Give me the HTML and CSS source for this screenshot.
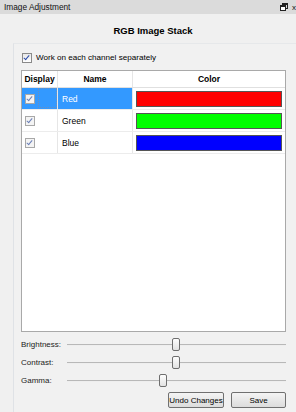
FILE: index.html
```html
<!DOCTYPE html>
<html>
<head>
  <title>Image Adjustment</title>
  <link rel="stylesheet" href="styles.css">
</head>
<body>
  <div class="titlebar">
    <span>Image Adjustment</span>
    <span class="tools">
      <svg width="8" height="8" viewBox="0 0 8 8"><rect x="2.5" y="0.5" width="5" height="5" fill="none" stroke="#222"/><rect x="0.5" y="2.5" width="5" height="5" fill="#fff" stroke="#222"/><rect x="0.5" y="2.5" width="5" height="1.5" fill="#222"/><rect x="2.5" y="0.5" width="5" height="1.5" fill="#222"/></svg>
      <span class="close">x</span>
    </span>
  </div>
  <h1 class="heading">RGB Image Stack</h1>
  <div class="frame">
    <div class="panel">
      <label class="check-row"><span class="box checked"></span>Work on each channel separately</label>
      <div class="table">
        <div class="row head">
          <div class="c1">Display</div><div class="c2">Name</div><div class="c3">Color</div>
        </div>
        <div class="row selected">
          <div class="c1"><span class="box checked dim"></span><span class="focus"></span></div>
          <div class="c2">Red</div>
          <div class="c3"><span class="swatch" style="background:#ff0000"></span></div>
        </div>
        <div class="row">
          <div class="c1"><span class="box checked dim"></span></div>
          <div class="c2">Green</div>
          <div class="c3"><span class="swatch" style="background:#00ff00"></span></div>
        </div>
        <div class="row">
          <div class="c1"><span class="box checked dim"></span></div>
          <div class="c2">Blue</div>
          <div class="c3"><span class="swatch" style="background:#0000ff"></span></div>
        </div>
      </div>
      <div class="sliders">
        <div class="slider-row"><span>Brightness:</span><div class="groove"><span class="handle" style="left:105px"></span></div></div>
        <div class="slider-row"><span>Contrast:</span><div class="groove"><span class="handle" style="left:105px"></span></div></div>
        <div class="slider-row"><span>Gamma:</span><div class="groove"><span class="handle" style="left:92px"></span></div></div>
      </div>
      <div class="buttons">
        <button class="btn undo">Undo Changes</button>
        <button class="btn save">Save</button>
      </div>
    </div>
  </div>
</body>
</html>
```

FILE: styles.css
```css
body { margin: 0; background: #f0f0f0; font-family: "Liberation Sans", Arial, sans-serif; font-size: 8px; color: #000; width: 296px; height: 412px; overflow: hidden; }
.titlebar { height: 14px; background: #dbdbdb; display: flex; justify-content: space-between; align-items: center; padding-left: 4px; font-size: 8.3px; color: #111; }
.tools { display: flex; align-items: center; gap: 4px; margin-right: 0; }
.close { font-size: 8px; }
.heading { margin: 0; height: 29px; line-height: 34px; text-align: center; font-size: 9.5px; font-weight: bold; padding-left: 10px; }
.frame { padding-left: 13px; }
.panel { border-left: 1px solid #dfe2e6; border-top: 1px solid #e6e8ea; background: #f1f1f1; padding: 8px 10px 0 7px; height: 360px; }
.check-row { display: flex; align-items: center; gap: 4px; height: 11px; padding-left: 1px; font-size: 8.1px; }
.box { width: 8px; height: 8px; border: 1px solid #8a8a8a; background: linear-gradient(#e8e8e8, #fff); position: relative; flex: none; }
.box.checked::after { content: ""; position: absolute; left: 2px; top: 0px; width: 2px; height: 5px; border: solid #2a4aa8; border-width: 0 1.5px 1.5px 0; transform: rotate(40deg); }
.box.dim { border-color: #a8a8a8; background: #f4f4f4; }
.box.dim.checked::after { border-color: #6a7fb8; }
.table { margin-top: 7px; height: 260px; border: 1px solid #a9a9a9; background: #fff; }
.row { display: flex; height: 21px; border-bottom: 1px solid #ececec; }
.row > div { display: flex; align-items: center; border-right: 1px solid #e6e6e6; }
.c1 { width: 36px; padding-left: 3px; box-sizing: border-box; position: relative; }
.c2 { width: 75px; padding-left: 4px; box-sizing: border-box; font-size: 8.5px; }
.c3 { flex: 1; padding: 0 3px 0 3px; border-right: none !important; }
.row.head { height: 16px; font-weight: bold; font-size: 8.5px; border-bottom: 1px solid #e0e0e0; }
.row.head > div { justify-content: center; padding: 0; }
.row.selected .c1, .row.selected .c2 { background: #3399ff; color: #fff; }
.focus { position: absolute; left: 16px; top: 0; width: 19px; height: 20px; border: 1px dotted #6a8fbf; box-sizing: border-box; }
.swatch { display: block; width: 100%; height: 16px; border: 1px solid #555; box-sizing: border-box; }
.sliders { margin-top: 6px; display: flex; flex-direction: column; gap: 5px; }
.slider-row { display: grid; grid-template-columns: 46px 1fr; align-items: center; height: 13px; font-size: 8px; color: #222; }
.groove { position: relative; height: 1px; background: #b8b8b8; border-bottom: 1px solid #eee; }
.handle { position: absolute; top: -6px; width: 6px; height: 11px; border: 1px solid #6e6e6e; border-radius: 2px; background: linear-gradient(#fdfdfd, #e2e2e2); }
.buttons { display: flex; justify-content: flex-end; gap: 7px; margin-top: 5px; }
.btn { height: 16px; padding: 0; border: 1px solid #707070; border-radius: 2px; background: linear-gradient(#f4f4f4, #dcdcdc); font-family: "Liberation Sans", Arial, sans-serif; font-size: 8px; color: #000; }
.undo { width: 56px; }
.save { width: 55px; }
```
